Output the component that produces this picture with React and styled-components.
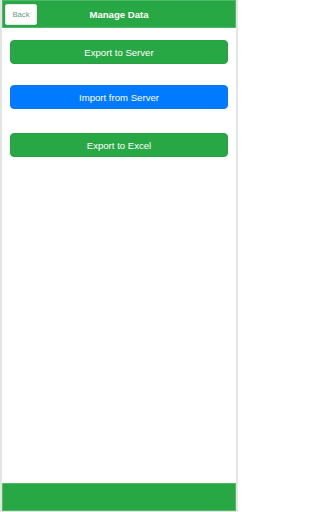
import React from "react";
import styled, { createGlobalStyle } from "styled-components";

const Global = createGlobalStyle`
  html, body { margin: 0; padding: 0; background: #ffffff; }
  body { font-family: "Liberation Sans", Arial, sans-serif; }
  * { box-sizing: border-box; }
`;

const Frame = styled.div`
  width: 238px;
  height: 512px;
  display: flex;
  flex-direction: column;
  border-left: 2px solid #e4e4e4;
  border-right: 2px solid #e4e4e4;
  border-bottom: 1px solid #e4e4e4;
  background: #ffffff;
`;

const Header = styled.header`
  height: 28px;
  background: #28a745;
  border: 1px solid #52b968;
  display: grid;
  grid-template-columns: 1fr auto 1fr;
  align-items: center;
  padding: 0 2px;
`;

const BackButton = styled.button`
  justify-self: start;
  width: 32px;
  height: 21px;
  background: #ffffff;
  border: 1px solid #e8e8e8;
  border-radius: 2px;
  color: #5a9e7a;
  font-family: "Liberation Sans", Arial, sans-serif;
  font-size: 7.6px;
  padding: 0;
  cursor: pointer;
`;

const Title = styled.h1`
  margin: 0;
  color: #ffffff;
  font-size: 9.6px;
  font-weight: bold;
`;

const Content = styled.main`
  flex: 1;
  display: flex;
  flex-direction: column;
  padding: 12px 8px 0;
`;

const ActionButton = styled.button`
  height: 24px;
  width: 100%;
  border: 1px solid ${(p) => (p.$variant === "primary" ? "#0a78f0" : "#27a043")};
  border-radius: 4px;
  background: ${(p) => (p.$variant === "primary" ? "#007bff" : "#28a745")};
  color: #ffffff;
  font-family: "Liberation Sans", Arial, sans-serif;
  font-size: 9.6px;
  margin-bottom: ${(p) => p.$gap}px;
  cursor: pointer;
`;

const Footer = styled.footer`
  height: 28px;
  background: #28a745;
  border: 1px solid #52b968;
`;

export default function App() {
  return (
    <>
      <Global />
      <Frame>
        <Header>
          <BackButton>Back</BackButton>
          <Title>Manage Data</Title>
          <span />
        </Header>
        <Content>
          <ActionButton $gap={21}>Export to Server</ActionButton>
          <ActionButton $variant="primary" $gap={24}>Import from Server</ActionButton>
          <ActionButton $gap={0}>Export to Excel</ActionButton>
        </Content>
        <Footer />
      </Frame>
    </>
  );
}
